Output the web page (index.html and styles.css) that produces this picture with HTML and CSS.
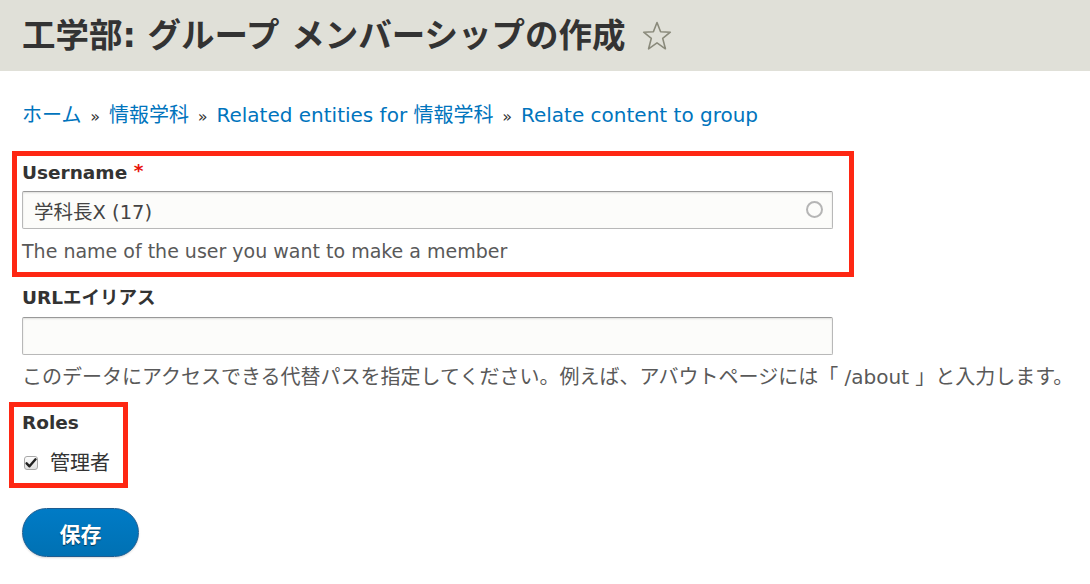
FILE: index.html
```html
<!DOCTYPE html>
<html lang="ja">
<head>
<meta charset="utf-8">
<title>工学部: グループ メンバーシップの作成</title>
<link rel="stylesheet" href="styles.css">
</head>
<body>
<header class="page-head">
  <h1 class="page-title">工学部: グループ メンバーシップの作成</h1>
  <svg class="star" width="30" height="30" viewBox="0 0 30 30" aria-hidden="true">
    <polygon points="15,1.5 18.6,10.8 28.3,11.2 20.7,17.4 23.4,27.8 15,21.9 6.6,27.8 9.3,17.4 1.7,11.2 11.4,10.8" fill="none" stroke="#8a8a7b" stroke-width="1.6" stroke-linejoin="round"/>
  </svg>
</header>
<main class="content">
  <nav class="breadcrumb">
    <a href="#">ホーム</a> <span class="sep">»</span> <a href="#">情報学科</a> <span class="sep">»</span> <a href="#">Related entities for 情報学科</a> <span class="sep">»</span> <a href="#">Relate content to group</a>
  </nav>
  <form class="form">
    <div class="mark mark-user">
      <label class="label">Username <span class="req">*</span></label>
      <div class="input-wrap">
        <input class="text-input" type="text" value="学科長X (17)">
        <span class="throbber"></span>
      </div>
      <div class="desc">The name of the user you want to make a member</div>
    </div>
    <div class="item-url">
      <label class="label">URLエイリアス</label>
      <div class="input-wrap">
        <input class="text-input" type="text" value="">
      </div>
      <div class="desc desc-ja">このデータにアクセスできる代替パスを指定してください。例えば、アバウトページには「 /about 」と入力します。</div>
    </div>
    <div class="mark mark-roles">
      <div class="label">Roles</div>
      <label class="check-row">
        <span class="checkbox">
          <svg width="12" height="12" viewBox="0 0 12 12" aria-hidden="true"><path d="M1.6 6.3 L4.5 9.3 L10.5 2.3" fill="none" stroke="#222" stroke-width="2.4" stroke-linecap="round" stroke-linejoin="round"/></svg>
        </span>
        <span class="check-label">管理者</span>
      </label>
    </div>
    <button class="btn" type="button">保存</button>
  </form>
</main>
</body>
</html>
```
FILE: styles.css
```css
html, body {
  margin: 0;
  padding: 0;
  background: #fff;
}
body {
  font-family: "DejaVu Sans", "Noto Sans CJK JP", sans-serif;
  color: #333;
  width: 1090px;
  height: 584px;
  overflow: hidden;
}
.page-head {
  height: 71px;
  background: #e0e0d8;
  display: flex;
  align-items: center;
  padding-left: 22px;
  gap: 16px;
}
.page-title {
  margin: 0;
  font-size: 33.5px;
  font-weight: 700;
  color: #333;
  line-height: 40px;
  height: 40px;
}
.star {
  display: block;
  margin-top: 1px;
}
.content {
  padding: 0 22px;
}
.breadcrumb {
  margin-top: 32px;
  height: 24px;
  line-height: 24px;
  font-size: 20px;
  white-space: nowrap;
}
.breadcrumb a {
  color: #0074bd;
  text-decoration: none;
}
.breadcrumb .sep {
  color: #333;
  margin: 0 2.5px;
  font-size: 16px;
}
.form {
  margin-top: 24px;
}
.label {
  display: block;
  height: 24px;
  font-weight: 700;
  font-size: 18.5px;
  line-height: 24px;
  color: #333;
  white-space: nowrap;
}
.req {
  color: #e8130a;
  position: relative;
  top: -2px;
}
.mark {
  border: 5px solid #fe2713;
}
.mark-user {
  width: fit-content;
  margin-left: -10px;
  padding: 5px 16px 9px 5px;
}
.input-wrap {
  position: relative;
  width: 811px;
  margin-top: 6px;
}
.text-input {
  display: block;
  box-sizing: border-box;
  width: 811px;
  height: 38px;
  margin: 0;
  padding: 0 11px;
  border: 1px solid #b8b8b8;
  border-top-color: #999;
  border-radius: 2px;
  background: #fcfcfa;
  box-shadow: inset 0 1px 2px rgba(0, 0, 0, 0.12);
  font-family: "DejaVu Sans", "Noto Sans CJK JP", sans-serif;
  font-size: 19.5px;
  color: #444;
  outline: none;
}
.throbber {
  position: absolute;
  right: 10px;
  top: 10px;
  width: 13px;
  height: 13px;
  border: 2.5px solid #b5b5b5;
  border-radius: 50%;
}
.desc {
  margin-top: 10px;
  height: 24px;
  font-size: 19px;
  line-height: 24px;
  color: #595959;
  white-space: nowrap;
}
.desc-ja {
  font-size: 20px;
}
.item-url {
  margin-top: 9px;
}
.item-url .input-wrap {
  margin-top: 7px;
}
.mark-roles {
  box-sizing: border-box;
  width: 119px;
  margin-left: -13px;
  margin-top: 13px;
  padding: 4px 8px 8px 8px;
}
.check-row {
  display: flex;
  align-items: center;
  height: 24px;
  margin-top: 16px;
  line-height: 24px;
}
.checkbox {
  box-sizing: border-box;
  width: 14px;
  height: 14px;
  margin-left: 2px;
  border: 1px solid #a8a8a8;
  border-radius: 3px;
  background: linear-gradient(#fdfdfd, #e0e0e0);
  display: flex;
  align-items: center;
  justify-content: center;
}
.checkbox svg {
  display: block;
}
.check-label {
  margin-left: 12px;
  font-size: 20px;
  color: #333;
}
.btn {
  display: block;
  margin-top: 20px;
  width: 117px;
  height: 49px;
  border: 1px solid #1e5c90;
  border-radius: 25px;
  background: linear-gradient(#007bc6, #0071b3);
  color: #fff;
  font-family: "DejaVu Sans", "Noto Sans CJK JP", sans-serif;
  font-weight: 700;
  font-size: 21px;
  text-shadow: 0 1px 1px rgba(0, 0, 0, 0.55);
  box-shadow: 0 1px 2px rgba(0, 0, 0, 0.15);
  padding: 0;
  cursor: pointer;
}
```
